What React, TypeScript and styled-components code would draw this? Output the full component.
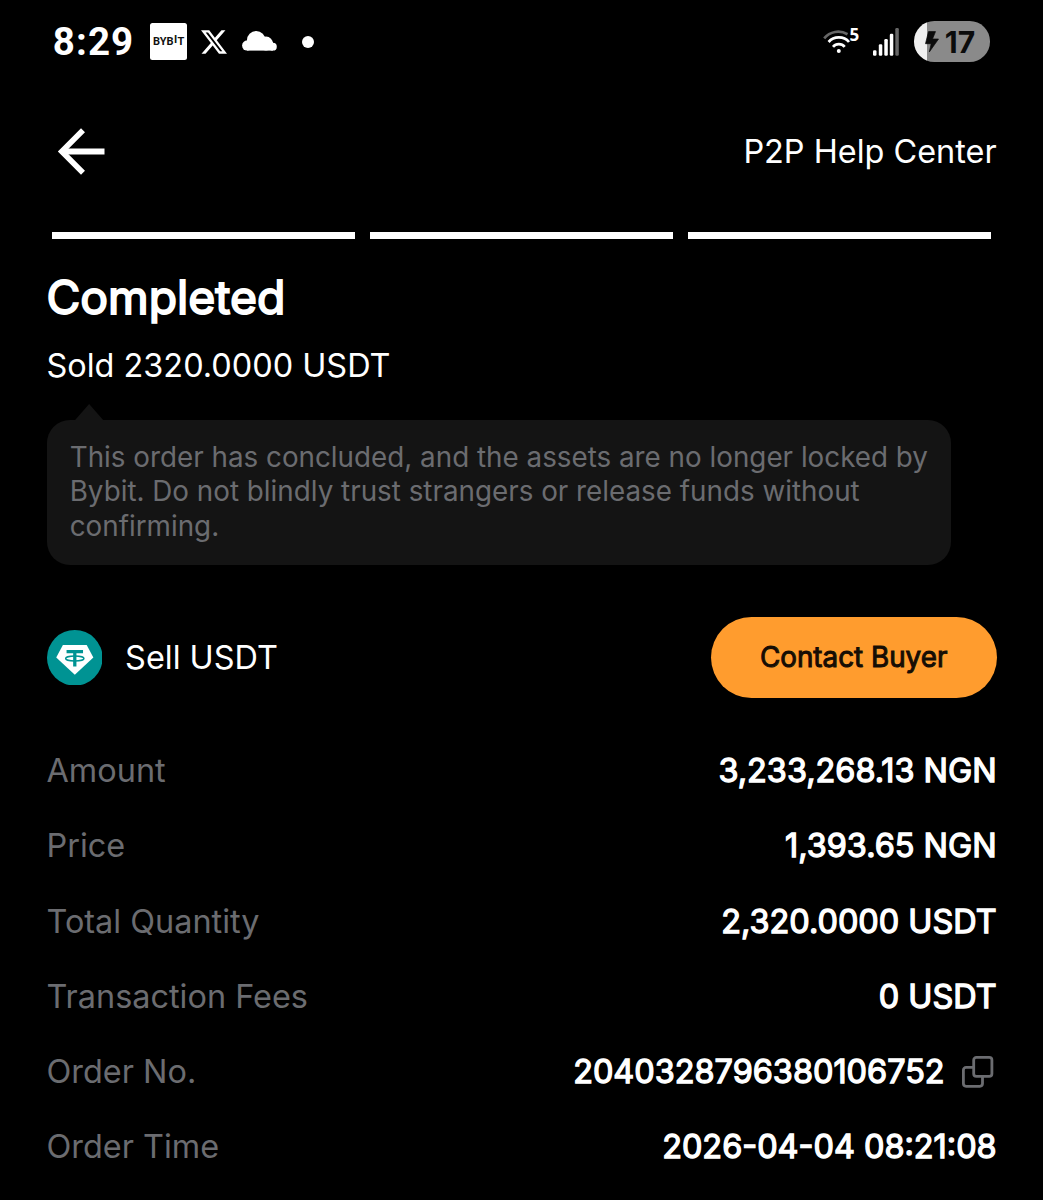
import React from "react";
import styled, { createGlobalStyle } from "styled-components";

const GlobalStyle = createGlobalStyle`
  * { box-sizing: border-box; }
  body {
    margin: 0;
    background: #000;
    color: #fff;
    font-family: Inter, "Liberation Sans", sans-serif;
  }
`;

const Screen = styled.main`
  display: flex;
  flex-direction: column;
  height: 1200px;
  padding: 0 46.35px 0 46.5px;
  background: #000;
  overflow: hidden;
`;

const StatusBar = styled.header`
  display: flex;
  align-items: center;
  justify-content: space-between;
  height: 83px;
  margin-right: 6.6px;
`;

const StatusGroup = styled.div`
  display: flex;
  align-items: center;
`;

const Clock = styled.time`
  width: 96.9px;
  padding-left: 6.3px;
  font-family: Roboto, sans-serif;
  font-size: 38.5px;
  font-weight: 700;
  letter-spacing: 1.1px;
  line-height: 40px;
  margin-right: 6.5px;
`;

const BybitBadge = styled.div`
  display: flex;
  align-items: center;
  justify-content: center;
  width: 37.5px;
  height: 37.5px;
  border-radius: 2.5px;
  background: #fff;
  color: #111;
  font: 700 11px/12px Roboto, Arial, sans-serif;
`;

const RaisedLetter = styled.span`
  margin: 0 0.3px;
  padding-bottom: 4px;
`;

const Icon = styled.svg<{ $left?: number; $right?: number }>`
  display: block;
  flex: none;
  margin-left: ${(p) => p.$left ?? 0}px;
  margin-right: ${(p) => p.$right ?? 0}px;
`;

const Dot = styled.span`
  width: 12px;
  height: 12px;
  margin-left: 25.5px;
  border-radius: 50%;
  background: #fff;
`;

const WifiBand = styled.span`
  align-self: flex-start;
  margin: 5px 0 0 -1.5px;
  width: 10.2px;
  font-family: "Open Sans", sans-serif;
  font-size: 17px;
  font-weight: 700;
  line-height: 18px;
`;

const Battery = styled.div`
  display: flex;
  align-items: center;
  width: 76.5px;
  height: 40.6px;
  margin-left: 14.6px;
  padding-left: 11px;
  border-radius: 20.3px;
  background: linear-gradient(90deg, #f0f0f0 13.2px, #8a8a8a 13.2px);
  color: #0c0c0c;
  font-size: 30px;
  font-weight: 700;
`;

const NavBar = styled.nav`
  display: flex;
  align-items: center;
  justify-content: space-between;
  height: 137px;
`;

const HelpLink = styled.span`
  font-size: 32.44px;
  line-height: 40px;
`;

const Steps = styled.div`
  display: grid;
  grid-template-columns: repeat(3, 1fr);
  gap: 14.5px;
  margin: 12.4px 5.6px 0 5.5px;
`;

const Step = styled.span`
  height: 6.2px;
  background: #fff;
`;

const Title = styled.h1`
  margin: 28px 0 0;
  font-size: 46.34px;
  font-weight: 400;
  line-height: 60px;
  -webkit-text-stroke: 0.04em currentColor;
`;

const Subtitle = styled.p`
  margin: 19px 0 0;
  font-size: 32.44px;
  line-height: 40px;
`;

const Pointer = styled.span`
  width: 28px;
  height: 16px;
  margin: 18.5px 0 0 28.6px;
  background: #141414;
  clip-path: polygon(50% 0, 100% 100%, 0 100%);
`;

const Note = styled.p`
  width: 904.4px;
  height: 145px;
  margin: 0;
  padding: 19.6px 22px 0 23.2px;
  border-radius: 23px;
  background: #141414;
  color: #6b6c70;
  font-size: 27.8px;
  line-height: 34.75px;
`;

const Trade = styled.section`
  display: flex;
  align-items: center;
  height: 81px;
  margin-top: 52px;
`;

const TradeLabel = styled.span`
  flex: 1;
  margin-left: 23px;
  font-size: 32.44px;
  line-height: 40px;
`;

const ContactButton = styled.button`
  width: 286px;
  height: 81px;
  padding: 0 0 2px;
  border: 0;
  border-radius: 41px;
  background: #ff9c2e;
  color: #160d04;
  font-family: inherit;
  font-size: 27.8px;
  font-weight: 400;
  line-height: 34px;
  -webkit-text-stroke: 0.035em currentColor;
`;

const Details = styled.dl`
  margin: 35.4px 0 0;
`;

const Row = styled.div`
  display: flex;
  align-items: center;
  justify-content: space-between;
  height: 75.25px;
  font-size: 32.44px;
  line-height: 40px;
`;

const Label = styled.dt`
  color: #6b6c70;
`;

const Value = styled.dd`
  display: flex;
  align-items: center;
  margin: 0;
  -webkit-text-stroke: 0.04em currentColor;
`;

const XIcon = () => (
  <Icon $left={13.6} width="26" height="26" viewBox="0 0 24 24" fill="#fff">
    <path d="M18.901 1.153h3.68l-8.04 9.19L24 22.846h-7.406l-5.8-7.584-6.638 7.584H.474l8.6-9.83L0 1.154h7.594l5.243 6.932ZM17.61 20.644h2.039L6.486 3.24H4.298Z" />
  </Icon>
);

const CloudIcon = () => (
  <Icon $left={14.6} width="35" height="21" viewBox="0 0 35 21" fill="#fff">
    <circle cx="14.2" cy="9.3" r="9.3" />
    <circle cx="24" cy="12.6" r="7" />
    <circle cx="5.1" cy="14.6" r="5" />
    <circle cx="30.9" cy="15.7" r="3.9" />
    <rect x="5" y="11" width="26" height="8.6" />
  </Icon>
);

const WifiIcon = () => (
  <Icon width="28" height="28" viewBox="0 0 28 28" fill="none" strokeWidth="2.7">
    <path d="M1.2 10.3C6.9 3.5 16.5 1.7 24.5 6.2" stroke="#666" />
    <path d="M5.6 14C10.8 7.900 20.900 7.900 26 14" stroke="#fff" />
    <path d="M10 18.800C13 15.300 18.700 15.300 21.700 18.800" stroke="#fff" />
    <circle cx="15.8" cy="23" r="2" fill="#fff" />
  </Icon>
);

const signalBars = [
  { x: 0, y: 22.3, fill: "#fff" },
  { x: 5.8, y: 16.3, fill: "#fff" },
  { x: 11.3, y: 11, fill: "#fff" },
  { x: 16.8, y: 5.7, fill: "#fff" },
  { x: 22.3, y: 0, fill: "#666" },
];

const SignalIcon = () => (
  <Icon $left={13.4} width="26" height="28" viewBox="0 0 26 28">
    {signalBars.map((bar) => (
      <rect key={bar.x} x={bar.x} y={bar.y} width="3.5" height={27.7 - bar.y} rx="1.2" fill={bar.fill} />
    ))}
  </Icon>
);

const BoltIcon = () => (
  <Icon $right={6.3} width="14" height="22" viewBox="0 0 14 22" fill="#0c0c0c" stroke="#0c0c0c" strokeWidth="0.7" strokeLinejoin="round">
    <path d="M3.5.6h7L7.5 8h6L4.3 21 6.2 12.7H.5Z" />
  </Icon>
);

const BackIcon = () => (
  <Icon $left={10.7} width="48" height="48" viewBox="0 0 48 48" fill="none" stroke="#fff">
    <path d="M26 2.3 4.8 23.5 26 44.7" strokeWidth="5.6" />
    <path d="M4.5 23.5H47.5" strokeWidth="6.2" />
  </Icon>
);

const TetherIcon = () => (
  <Icon width="55.6" height="55.6" viewBox="0 0 56 56" fill="none">
    <circle cx="28" cy="28" r="28" fill="#009393" />
    <path d="M16 15h24l6.7 12.8L28 45 9.3 27.8Z" fill="#fff" />
    <path d="M19.7 21.8h16.6M28 21.8v15" stroke="#009393" strokeWidth="3.3" />
    <ellipse cx="28" cy="28.7" rx="9.2" ry="2.5" stroke="#009393" strokeWidth="1.5" />
  </Icon>
);

const CopyIcon = () => (
  <Icon $left={17} $right={3} width="32" height="32" viewBox="0 0 32 32" fill="none" stroke="#6b6c70" strokeWidth="2.8">
    <rect x="11.7" y="1.4" width="18.2" height="19" rx="2.7" />
    <path d="M11.7 11.4H4.1a2.7 2.7 0 0 0-2.7 2.7V27.6a2.7 2.7 0 0 0 2.7 2.7H17.8a2.7 2.7 0 0 0 2.7-2.7V20.4" />
  </Icon>
);

const details = [
  { label: "Amount", value: "3,233,268.13 NGN" },
  { label: "Price", value: "1,393.65 NGN" },
  { label: "Total Quantity", value: "2,320.0000 USDT" },
  { label: "Transaction Fees", value: "0 USDT" },
  { label: "Order No.", value: "2040328796380106752", copyable: true },
  { label: "Order Time", value: "2026-04-04 08:21:08" },
];

export default function App() {
  return (
    <>
      <GlobalStyle />
      <Screen>
        <StatusBar>
          <StatusGroup>
            <Clock>8:29</Clock>
            <BybitBadge>
              BYB<RaisedLetter>I</RaisedLetter>T
            </BybitBadge>
            <XIcon />
            <CloudIcon />
            <Dot />
          </StatusGroup>
          <StatusGroup>
            <WifiIcon />
            <WifiBand>5</WifiBand>
            <SignalIcon />
            <Battery>
              <BoltIcon />
              17
            </Battery>
          </StatusGroup>
        </StatusBar>
        <NavBar>
          <BackIcon />
          <HelpLink>P2P Help Center</HelpLink>
        </NavBar>
        <Steps>
          <Step />
          <Step />
          <Step />
        </Steps>
        <Title>Completed</Title>
        <Subtitle>Sold 2320.0000 USDT</Subtitle>
        <Pointer />
        <Note>
          This order has concluded, and the assets are no longer locked by Bybit. Do not blindly trust strangers or
          release funds without confirming.
        </Note>
        <Trade>
          <TetherIcon />
          <TradeLabel>Sell USDT</TradeLabel>
          <ContactButton>Contact Buyer</ContactButton>
        </Trade>
        <Details>
          {details.map((item) => (
            <Row key={item.label}>
              <Label>{item.label}</Label>
              <Value>
                {item.value}
                {item.copyable && <CopyIcon />}
              </Value>
            </Row>
          ))}
        </Details>
      </Screen>
    </>
  );
}
